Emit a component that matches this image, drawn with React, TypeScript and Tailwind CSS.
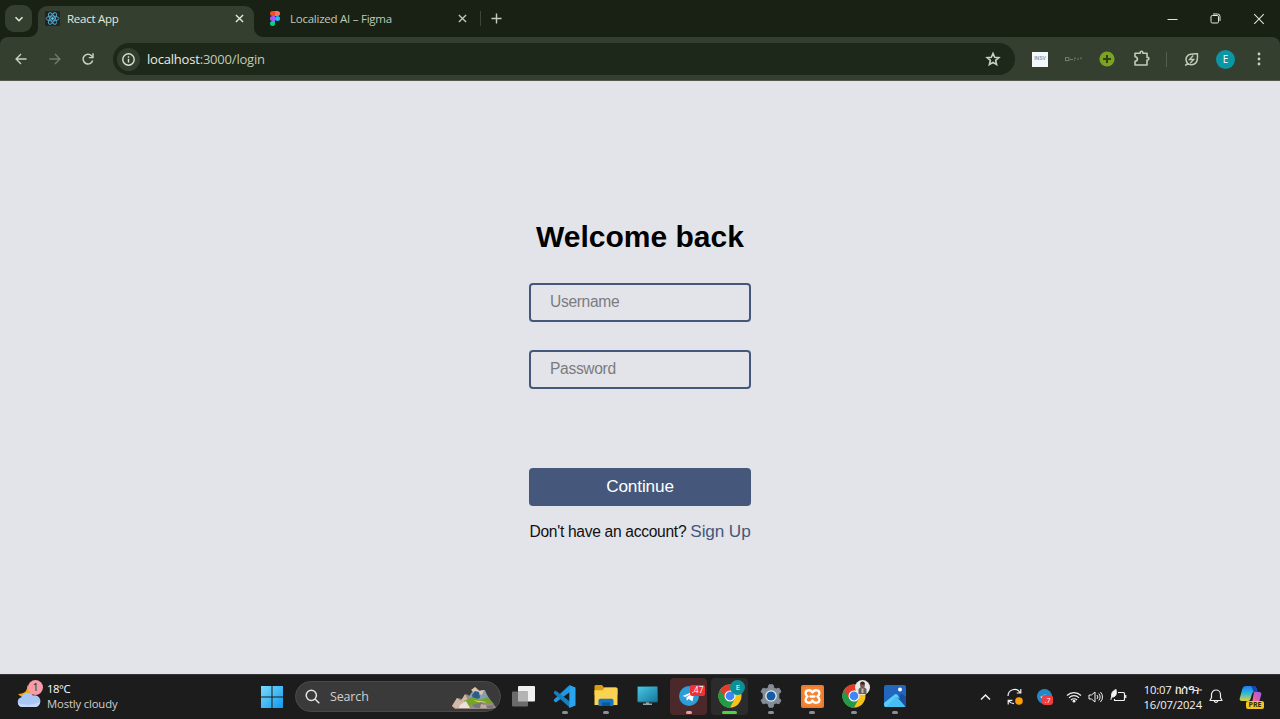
import React from "react";

const ui = "font-['Open_Sans','Noto_Sans',sans-serif]";

type BoxProps = { className?: string; children?: React.ReactNode };

function Slot({ className = "", children }: BoxProps) {
  return <div className={`flex shrink-0 items-center justify-center ${className}`}>{children}</div>;
}

function ReactLogo() {
  return (
    <svg width="15" height="15" viewBox="0 0 15 15">
      <rect width="15" height="15" rx="1" fill="#20232a" />
      <g fill="none" stroke="#53aecb" strokeWidth="0.9">
        <ellipse cx="7.5" cy="7.5" rx="6.4" ry="2.5" />
        <ellipse cx="7.5" cy="7.5" rx="6.4" ry="2.5" transform="rotate(60 7.5 7.5)" />
        <ellipse cx="7.5" cy="7.5" rx="6.4" ry="2.5" transform="rotate(120 7.5 7.5)" />
      </g>
      <circle cx="7.5" cy="7.5" r="1.3" fill="#61dafb" />
    </svg>
  );
}

function FigmaLogo() {
  return (
    <svg width="10" height="15" viewBox="0 0 10 15">
      <path d="M2.5 0H5v5H2.5a2.5 2.5 0 0 1 0-5z" fill="#f24e1e" />
      <path d="M5 0h2.5a2.5 2.5 0 0 1 0 5H5z" fill="#ff7262" />
      <path d="M2.5 5H5v5H2.5a2.5 2.5 0 0 1 0-5z" fill="#a259ff" />
      <circle cx="7.5" cy="7.5" r="2.5" fill="#1abcfe" />
      <path d="M2.5 10H5v2.5A2.5 2.5 0 1 1 2.5 10z" fill="#0acf83" />
    </svg>
  );
}

function Cross({ size, stroke, width }: { size: number; stroke: string; width: number }) {
  return (
    <svg width={size} height={size} viewBox="0 0 10 10" stroke={stroke} strokeWidth={width}>
      <path d="M1 1l8 8M9 1l-8 8" />
    </svg>
  );
}

function Flare({ flip = false }: { flip?: boolean }) {
  return (
    <svg width="9" height="9" viewBox="0 0 9 9" className={`shrink-0 self-end ${flip ? "-scale-x-100" : ""}`}>
      <path d="M9 0v9H0a9 9 0 0 0 9-9z" fill="#343f2f" />
    </svg>
  );
}

function TabStrip() {
  return (
    <div className="flex h-[37px] shrink-0 bg-[#182113]">
      <Slot className="mt-[5px] ml-[5px] size-[27px] rounded-[9px] bg-[#343f2f]">
        <svg width="10" height="10" viewBox="0 0 10 10" fill="none" stroke="#e3e8dc" strokeWidth="1.6">
          <path d="M1.5 3.2L5 6.7l3.5-3.5" />
        </svg>
      </Slot>
      <div className="ml-[-3px] flex">
        <Flare />
        <div className="mt-[6px] flex h-[31px] w-[216px] items-center rounded-t-[9px] bg-[#343f2f] pr-[10px] pb-[6px] pl-[7px]">
          <ReactLogo />
          <span className="mt-px ml-[7px] flex-1 text-[11.5px] leading-[16px] tracking-[-0.25px] text-[#e6eadf]">React App</span>
          <Cross size={9} stroke="#e0e6d8" width={1.6} />
        </div>
        <Flare flip />
      </div>
      <div className="flex h-[37px] w-[204px] items-center pl-[7px]">
        <FigmaLogo />
        <span className="mt-px ml-[10px] flex-1 text-[11.5px] leading-[16px] tracking-[-0.25px] text-[#c0c9b6]">Localized AI – Figma</span>
        <Cross size={9} stroke="#c0c9b6" width={1.5} />
      </div>
      <div className="mt-[11px] ml-[13px] h-[15px] w-px bg-[#3d4938]" />
      <Slot className="ml-[7px] w-[17px]">
        <svg width="11" height="11" viewBox="0 0 11 11" stroke="#c5cebb" strokeWidth="1.4">
          <path d="M5.5 .5v10M.5 5.5h10" />
        </svg>
      </Slot>
      <div className="ml-auto flex">
        <Slot className="w-[43px]">
          <svg width="11" height="11" viewBox="0 0 11 11" stroke="#dfe4da"><path d="M.5 6.500h10" /></svg>
        </Slot>
        <Slot className="w-[43px]">
          <svg width="11" height="11" viewBox="0 0 11 11" fill="none" stroke="#e4e9df">
            <rect x="1" y="2.5" width="7.5" height="7.5" rx="1.3" />
            <path d="M3 1h4.6A2.4 2.4 0 0 1 10 3.4V8" />
          </svg>
        </Slot>
        <Slot className="w-[43px]"><Cross size={12} stroke="#dfe4da" width={0.9} /></Slot>
      </div>
    </div>
  );
}

function Toolbar() {
  return (
    <div className="h-[44px] shrink-0 bg-[#182113]">
      <div className="flex h-[44px] items-center rounded-t-[8px] bg-[#343f2f] shadow-[inset_0_-1px_0_#50594b]">
        <Slot className="ml-[4px] w-[34px]">
          <svg width="12" height="12" viewBox="0 0 13 13" fill="none" stroke="#c8d1be" strokeWidth="1.5">
            <path d="M12.500 6.5H1.5M6.5 1.2L1.2 6.5l5.3 5.3" />
          </svg>
        </Slot>
        <Slot className="w-[33px]">
          <svg width="12" height="12" viewBox="0 0 13 13" fill="none" stroke="#707b69" strokeWidth="1.5">
            <path d="M.5 6.5h11M6.5 1.2l5.3 5.3-5.3 5.3" />
          </svg>
        </Slot>
        <Slot className="w-[34px]">
          <svg width="12" height="12" viewBox="0 0 13 13" fill="none" stroke="#c8d1be" strokeWidth="1.6">
            <path d="M11.600 8.2A5.300 5.300 0 1 1 10.300 2.9L11.3 4.2" />
            <path d="M11.900 .4v4.600H7.4" />
          </svg>
        </Slot>
        <div className="ml-[8px] flex h-[32px] w-[902px] items-center rounded-full bg-[#1e281a] pr-[14px] pl-[4px]">
          <Slot className="size-[23px] rounded-full bg-[#333e2e]">
            <svg width="13" height="13" viewBox="0 0 13 13" fill="none" stroke="#dce3d3" strokeWidth="1.4">
              <circle cx="6.5" cy="6.5" r="5.7" />
              <path d="M6.5 5.8v3.8M6.5 3.3v1.4" />
            </svg>
          </Slot>
          <span className="ml-[7px] flex-1 text-[13px] leading-[18px] tracking-[-0.2px] text-[#c0cab5]"><span className="text-[#e8ece2]">localhost</span>:3000/login</span>
          <svg width="16" height="16" viewBox="0 0 24 24" fill="none" stroke="#c8d1be" strokeWidth="2.400" strokeLinejoin="miter">
            <path d="M12 3.6l2.5 5.8 6.3.6-4.8 4.1 1.4 6.2-5.4-3.3-5.4 3.3 1.4-6.2L3.2 10l6.3-.6z" />
          </svg>
        </div>
        <Slot className="ml-[17px] h-[15px] w-[16px] bg-[#f5f7fa] font-['Liberation_Sans',sans-serif] text-[5px] font-bold text-[#86a2b5]">INSV</Slot>
        <Slot className="ml-[17px] w-[17px]">
          <svg width="17" height="5" viewBox="0 0 17 5" fill="none" stroke="#858e7e" strokeWidth=".8">
            <rect x=".5" y=".7" width="3.5" height="3" />
            <path d="M5 2.5h3M9 1.2h2M9 3.2h1M12 2h2M15 1.2h2" />
          </svg>
        </Slot>
        <Slot className="ml-[17px] w-[16px]">
          <svg width="16" height="16" viewBox="0 0 16 16">
            <circle cx="8" cy="8" r="7.6" fill="#7ba321" />
            <path d="M8 4v8M4 8h8" stroke="#2e4211" strokeWidth="2" />
          </svg>
        </Slot>
        <Slot className="ml-[18px] w-[17px] pb-px">
          <svg width="17" height="17" viewBox="0 0 17 17" fill="none" stroke="#c1cbb7" strokeWidth="1.6" strokeLinejoin="round">
            <path d="M2 3.200h5.200V2.600a1.300 1.300 0 0 1 2.600 0v.6H14v4.200h.6a1.300 1.300 0 0 1 0 2.600H14V15H2v-3.600c3.200-.4 3.200-4.200 0-4.600z" />
          </svg>
        </Slot>
        <div className="ml-[16px] h-[15px] w-px bg-[#53604c]" />
        <Slot className="ml-[16px] w-[16px]">
          <svg width="15" height="15" viewBox="0 0 16 16" fill="none" stroke="#c1cbb7" strokeWidth="1.6">
            <path d="M14.300 1.800c.3 4.300.2 7.900-1.700 9.800-2.400 2.400-6.500 2.600-8.800.3s-2.200-6 .4-8.300c2.300-2 5.800-1.700 10.100-1.800zM4 12L1.300 14.500" />
            <path d="M9.800 3.800L5.900 8h4.400L6.600 12" strokeWidth="1.400" />
          </svg>
        </Slot>
        <Slot className="ml-[17px] size-[19px] rounded-full bg-[#0b96a6] text-[10px] leading-none text-white">E</Slot>
        <Slot className="ml-[15px] w-[18px]">
          <svg width="4" height="14" viewBox="0 0 4 14" fill="#c8d1be">
            <circle cx="2" cy="2" r="1.4" /><circle cx="2" cy="7" r="1.4" /><circle cx="2" cy="12" r="1.4" />
          </svg>
        </Slot>
      </div>
    </div>
  );
}

function LoginPage() {
  const field =
    "block h-[39px] w-full rounded-[4px] border-2 border-[#45587c] bg-transparent px-[19px] pb-px text-[15.600px] tracking-[-0.33px] text-[#222] placeholder:text-[#7b7b7e] outline-none";
  return (
    <main className="flex flex-1 justify-center bg-[#e3e4ea] font-['Liberation_Sans',Arial,sans-serif]">
      <div className="w-[222px] pt-[138px]">
        <h1 className="text-center text-[30px] leading-[36px] font-bold whitespace-nowrap text-black">Welcome back</h1>
        <input className={`mt-[28px] ${field}`} placeholder="Username" />
        <input className={`mt-[28px] ${field}`} type="password" placeholder="Password" />
        <button className="mt-[79px] block h-[38px] w-full rounded-[4px] bg-[#45587b] text-[17.200px] tracking-[-0.15px] text-white">Continue</button>
        <p className="mt-[13px] pl-[0.5px] text-[15.600px] leading-[24px] tracking-[-0.3px] whitespace-nowrap text-[#101010]">
          Don't have an account? <a className="text-[17.200px] tracking-[-0.12px] text-[#45587b]">Sign Up</a>
        </p>
      </div>
    </main>
  );
}

function ChromeLogo() {
  return (
    <svg width="24" height="24" viewBox="0 0 24 24">
      <circle cx="12" cy="12" r="11.500" fill="#fbc116" />
      <path d="M12 12L2.040 6.250A11.500 11.500 0 0 1 21.960 6.250L12 6.500z" fill="#e33b2e" />
      <path d="M2.040 6.250A11.500 11.500 0 0 0 12 23.500L16.800 14.700 12 12z" fill="#229a49" />
      <path d="M2.040 6.250L7.200 15 12 12V6.500z" fill="#e33b2e" />
      <path d="M2.040 6.250L7.200 14.700A5.500 5.500 0 0 0 13 17.400L12 23.500A11.500 11.500 0 0 1 2.040 6.250z" fill="#229a49" />
      <circle cx="12" cy="12" r="5.500" fill="#fff" />
      <circle cx="12" cy="12" r="4.400" fill="#4285f4" />
    </svg>
  );
}

function VsCode() {
  return (
    <svg width="23" height="23" viewBox="0 0 24 24">
      <path d="M1 15.200L17 .3 18 7 3 18.200 1 17z" fill="#2097df" />
      <path d="M1 6.900l2-1 15 11.600V24L1 8.900z" fill="#147fc3" />
      <path d="M17 0l6.500 2.700v18.600L17 24z" fill="#2ba4ee" />
    </svg>
  );
}

function Folder() {
  return (
    <svg width="24" height="22" viewBox="0 0 24 22">
      <path d="M1.500 0h6.500l2 2.500h12a1.500 1.500 0 0 1 1.500 1.500v6H.5V1z" fill="#d99d13" />
      <path d="M.5 5.200h8L10.500 2.500H22a1.500 1.500 0 0 1 1.500 1.500V20H.5z" fill="#fbd252" />
      <path d="M4.500 21v-5.500a1.700 1.700 0 0 1 1.700-1.700h11.600a1.700 1.700 0 0 1 1.700 1.700V21z" fill="#1675bf" />
      <path d="M8 17.500h8V21H8z" fill="#0d5796" />
    </svg>
  );
}

function Monitor() {
  return (
    <svg width="21" height="20" viewBox="0 0 21 20">
      <defs>
        <linearGradient id="screen" x1="0" y1="0" x2="1" y2="1">
          <stop stopColor="#4cc8e3" /><stop offset="1" stopColor="#13769c" />
        </linearGradient>
      </defs>
      <path d="M9 15h3v2.500h3v1.500H6v-1.500h3z" fill="#96a5ac" />
      <rect x=".5" y=".5" width="20" height="15.500" rx="1" fill="url(#screen)" stroke="#256174" />
    </svg>
  );
}

function Telegram({ size }: { size: number }) {
  return (
    <svg width={size} height={size} viewBox="0 0 20 20">
      <circle cx="10" cy="10" r="10" fill="#2b9dd8" />
      <path d="M3.500 10L15.500 5l-2 10.500-3.800-2.600-1.900 1.900-.5-3.300L13 7.200l-6.600 3.900z" fill="#fff" />
    </svg>
  );
}

function Gear() {
  return (
    <svg width="24" height="24" viewBox="0 0 24 24">
      <path
        d="M10 .8h4l.7 3 2.300 1.300 3-.9 2 3.500-2.200 2.100v4.400l2.200 2.100-2 3.500-3-.9-2.300 1.300-.7 3h-4l-.7-3L7 18.900l-3 .9-2-3.500 2.200-2.100V9.800L2 7.700l2-3.500 3 .9 2.300-1.300z"
        fill="#858e97" stroke="#858e97" strokeLinejoin="round"
      />
      <circle cx="12" cy="12" r="5.800" fill="#e5eaf0" />
      <circle cx="12" cy="12" r="4.500" fill="#155ba8" />
    </svg>
  );
}

function Xampp() {
  return (
    <svg width="23" height="23" viewBox="0 0 23 23">
      <rect width="23" height="23" rx="2" fill="#f58433" />
      <rect x="1" y="1" width="21" height="21" rx="1.500" fill="none" stroke="#e06b1d" strokeWidth=".7" />
      <g fill="none" stroke="#fff" strokeWidth="2.300" strokeLinecap="round" strokeLinejoin="round">
        <path d="M11.500 7.500C10 4.300 4.600 4.600 4.600 8q0 2.300 2 3.500-2 1.200-2 3.500c0 3.400 5.400 3.700 6.900.5 1.500 3.200 6.900 2.900 6.900-.5q0-2.300-2-3.500 2-1.200 2-3.500c0-3.400-5.400-3.700-6.900-.5z" />
        <path d="M9.500 11.500h4" />
      </g>
    </svg>
  );
}

function Photos() {
  return (
    <svg width="22" height="22" viewBox="0 0 22 22">
      <rect width="22" height="22" rx="2" fill="#2366bd" />
      <path d="M12 14l5-4.500q1-.8 2 0l3 2.500v8a2 2 0 0 1-2 2h-3z" fill="#194f9e" />
      <path d="M1 21.500l9.600-10.300a1.500 1.500 0 0 1 2 0L21.300 21.500q-.7.500-1.300.5H2q-.6 0-1-.5z" fill="#48bdf2" />
      <path d="M0 18l10.600-8.500q1.500-1 3 .5l2.500 3.500-4.200-1.800L2 22q-2 0-2-2z" fill="#58cdf8" />
      <circle cx="16" cy="4.500" r="2" fill="#fff" />
    </svg>
  );
}

function TaskItem({ children, mark = "bg-[#8e8e8e] w-[6px]", box = "" }: { children: React.ReactNode; mark?: string; box?: string }) {
  return (
    <div className="flex w-[41.25px] justify-center">
      <div className={`relative flex h-[37px] w-[37px] items-center justify-center rounded-[4px] ${box}`}>
        {children}
        <div className={`absolute bottom-px h-[3px] rounded-full ${mark}`} />
      </div>
    </div>
  );
}

function SearchArt() {
  return (
    <svg width="44" height="22" viewBox="0 0 44 22">
      <path d="M0 19l5-8 5 1 4-5 4 2 5-9 5 4 4-1 5 8 6 8 1 2-7 1H3z" fill="#9a8a84" />
      <path d="M0 19l5-8 4 3 4-7 3 6-3 8H3z" fill="#d3b8aa" />
      <path d="M16 11l6-9 5 2 6-1 3 8-9 4z" fill="#829eb0" />
      <path d="M19 3l4-3 4 4 5-1-2 5-7-2z" fill="#dfc3aa" />
      <path d="M20 8l3-4 4 1 1 6-7 2z" fill="#2b5d88" />
      <path d="M12 14l8-4 9 3 6-3 7 7-12-2-10 3-7 1z" fill="#74a52b" />
      <path d="M21 13l8 1 6 1-7 1z" fill="#d1d445" />
      <path d="M20 18l9-3 6 4 7-1-2 3H24z" fill="#73777e" />
      <path d="M8 18l6-4 4 7H7z" fill="#ede1dc" />
      <path d="M29 17l5 1 1 3h-7z" fill="#c9a9a0" />
    </svg>
  );
}

function Tray() {
  const line = { fill: "none", stroke: "#f0f0f0", strokeWidth: 1.2 };
  return (
    <div className="ml-auto flex h-full items-center">
      <Slot className="w-[20px]">
        <svg width="11" height="8" viewBox="0 0 11 8" {...line} strokeWidth={1.500}><path d="M1 6.500l4.500-4.500L10 6.500" /></svg>
      </Slot>
      <Slot className="ml-[11px] w-[18px]">
        <svg width="18" height="18" viewBox="0 0 18 18" {...line}>
          <path d="M2 8a6.500 6.500 0 0 1 12-3.500M14.800 1v4h-4M2.200 16.500v-4.200h4.200M2.800 12.800A7 7 0 0 0 8 15.700" />
          <circle cx="13" cy="13" r="3.800" fill="#ff9d0a" stroke="none" />
        </svg>
      </Slot>
      <Slot className="relative ml-[13px] size-[15px]">
        <svg width="15" height="15" viewBox="0 0 15 15"><circle cx="7.500" cy="7.500" r="7.500" fill="#2488c4" /><path d="M3 8l6-3-3 5z" fill="#a8d5ee" /></svg>
        <div className="absolute -right-px -bottom-px flex h-[10px] w-[11px] items-center justify-center rounded-[3px] bg-[#f33d3c] text-[7px] leading-none text-white">.7</div>
      </Slot>
      <Slot className="ml-[14px] w-[16px]">
        <svg width="16" height="12" viewBox="0 0 16 12" {...line} strokeWidth={1.200}>
          <path d="M1 4.500a10 10 0 0 1 14 0M3 6.800a7 7 0 0 1 10 0M5 9a4.300 4.300 0 0 1 6 0" />
          <circle cx="8" cy="10.200" r="1.400" fill="#f0f0f0" stroke="none" />
        </svg>
      </Slot>
      <Slot className="ml-[6px] w-[15px]">
        <svg width="15" height="12" viewBox="0 0 15 12" {...line} strokeWidth={1}>
          <path d="M1 4h2.500L7 1v10L3.500 8H1zM9 4a3 3 0 0 1 0 4M10.700 2.500a5 5 0 0 1 0 7M12.400 1a7 7 0 0 1 0 10" />
        </svg>
      </Slot>
      <Slot className="ml-[7px] w-[17px] pb-px">
        <svg width="17" height="14" viewBox="0 0 17 14" {...line}>
          <path d="M8 3.500h5.500a1 1 0 0 1 1 1v6a1 1 0 0 1-1 1H4.500V10M15.800 6v3" />
          <path d="M6 .5C3.500 1.500 1.200 3 1.500 7.500L.8 11M1.500 8.200C6 8.200 7.200 5 6 .5z" fill="#f4f4f4" strokeWidth=".8" />
        </svg>
      </Slot>
      <div className="ml-[13px] w-[62px] text-[11.300px] leading-[15px] whitespace-nowrap text-[#f2f2f2]">
        <div className="flex items-baseline justify-end tracking-[-0.2px]">10:07<span className="ml-[3px] text-[11.800px] leading-[15px] tracking-[-0.4px]">ከሰዓት</span></div>
        <div className="flex justify-end tracking-[-0.15px]">16/07/2024</div>
      </div>
      <Slot className="ml-[7px] w-[14px]">
        <svg width="14" height="15" viewBox="0 0 14 15" {...line}>
          <path d="M1 11.500L2.500 8.500V5.500a4.500 4.500 0 0 1 9 0v3L13 11.500zM5.200 12a1.900 1.900 0 0 0 3.600 0" strokeLinejoin="round" />
        </svg>
      </Slot>
      <Slot className="relative mr-[17px] ml-[16px] size-[24px]">
        <svg width="24" height="24" viewBox="0 0 24 24">
          <defs>
            <linearGradient id="blue" x1="0" y1="0" x2="0" y2="1">
              <stop stopColor="#2379ed" /><stop offset=".45" stopColor="#25b6df" /><stop offset="1" stopColor="#e5cf35" />
            </linearGradient>
            <linearGradient id="pink" x1="1" y1="0" x2="0" y2="1">
              <stop stopColor="#9460ed" /><stop offset=".5" stopColor="#ec5ba4" /><stop offset="1" stopColor="#f7924c" />
            </linearGradient>
          </defs>
          <path d="M15 7h5q3 0 2.200 3l-2 7q-1 4-4 4h-6q2 0 2.800-3z" fill="url(#pink)" />
          <path d="M7 1h8q2 0 2.700 3l.8 3h-3.500q-1.500 0-2 2l-1.500 5q-.6 2-2.500 2H3Q0 16 .8 13l2.500-9Q4.200 1 7 1z" fill="url(#blue)" />
          <path d="M12 1h3q2 0 2.700 3l.8 3h-4q-1.500-5-2.500-6z" fill="#1847b3" />
        </svg>
        <div className="absolute -right-px bottom-0 flex h-[8px] w-[18px] items-center justify-center rounded-[2px] bg-[#f5c51f] text-[7px] leading-none font-bold text-[#332b0b]">PRE</div>
      </Slot>
    </div>
  );
}

function Taskbar() {
  return (
    <div className="flex h-[45px] shrink-0 items-center bg-[#1c1c1c] shadow-[inset_0_1px_0_#343434]">
      <div className="flex w-[260px] items-center pb-px pl-[17px]">
        <div className="relative mb-[3px] h-[30px] w-[26px] shrink-0">
          <svg width="26" height="30" viewBox="0 0 26 30">
            <path d="M10 5c1 5-2 9-9 9 4 5 13 5 15-1z" fill="#f1a71c" />
            <path d="M5 27a5 5 0 0 1-.5-9.800A6.500 6.500 0 0 1 16 15.500 5.800 5.800 0 0 1 19 27z" fill="#a9c6f4" />
            <path d="M1 23q11 4 22-1-1 5-5 5H5q-3 0-4-4z" fill="#c5dafb" />
          </svg>
          <div className="absolute top-0 right-0 flex size-[15px] items-center justify-center rounded-full bg-[#fb9ba4] text-[10px] leading-none text-[#242020]">1</div>
        </div>
        <div className="ml-[4px] text-[11.300px] leading-[15px] whitespace-nowrap">
          <div className="tracking-[-0.4px] text-white">18°C</div>
          <div className="tracking-[-0.15px] text-[#cfcfcf]">Mostly cloudy</div>
        </div>
      </div>
      <Slot className="w-[24px]">
        <svg width="22" height="22" viewBox="0 0 22 22">
          <defs>
            <linearGradient id="win" x1="0" y1="0" x2="1" y2="1">
              <stop stopColor="#78dcfb" /><stop offset="1" stopColor="#1298ee" />
            </linearGradient>
          </defs>
          <path d="M0 0h10.500v10.500H0zM11.500 0H22v10.500H11.500zM0 11.500h10.500V22H0zM11.500 11.500H22V22H11.500z" fill="url(#win)" />
        </svg>
      </Slot>
      <div className="ml-[11px] flex h-[31px] w-[206px] items-center rounded-full border border-[#4a4a4a] bg-[#3a3a3a] pr-[4px] pl-[9px]">
        <svg width="15" height="15" viewBox="0 0 15 15" fill="none" stroke="#e4e4e4" strokeWidth="1.500">
          <circle cx="6.300" cy="6.300" r="5.100" /><path d="M10 10l4.300 4.300" />
        </svg>
        <span className="ml-[10px] flex-1 text-[12.500px] leading-[18px] tracking-[-0.15px] text-[#d0d0d0]">Search</span>
        <div className="mt-[3px]"><SearchArt /></div>
      </div>
      <div className="ml-[2px] flex pb-px">
        <TaskItem mark="hidden">
          <svg width="23" height="21" viewBox="0 0 23 21">
            <rect x="6" width="17" height="15.500" rx="1" fill="#f0f0f0" />
            <rect y="5.500" width="16" height="15" rx="1" fill="#6b6b6b" />
            <path d="M6 5.500h10v10H6z" fill="#b4b4b4" />
          </svg>
        </TaskItem>
        <TaskItem><VsCode /></TaskItem>
        <TaskItem><Folder /></TaskItem>
        <TaskItem mark="hidden"><Monitor /></TaskItem>
        <TaskItem box="bg-[#4b292a]" mark="bg-[#e9a0a2] w-[6px]">
          <Telegram size={20} />
          <div className="absolute top-[7px] right-[2px] flex h-[11px] w-[15px] items-center justify-center rounded-[2px] bg-[#ee3334] text-[8.500px] leading-none text-white">.47</div>
        </TaskItem>
        <TaskItem box="bg-[#2b2b2b]" mark="bg-[#4cd43c] w-[15px]">
          <ChromeLogo />
          <div className="absolute top-[2px] right-[3px] flex size-[15px] items-center justify-center rounded-full bg-[#0b8f98] text-[8px] leading-none text-white">E</div>
        </TaskItem>
        <TaskItem><Gear /></TaskItem>
        <TaskItem><Xampp /></TaskItem>
        <TaskItem>
          <ChromeLogo />
          <svg width="15" height="15" viewBox="0 0 15 15" className="absolute top-[2px] right-[2px]">
            <circle cx="7.500" cy="7.500" r="7.500" fill="#e8e8e8" />
            <path d="M3.500 14V9l2-1.500h4l2 1.500v5z" fill="#68605b" />
            <ellipse cx="7.500" cy="5.300" rx="2.300" ry="3.300" fill="#795a4c" />
            <path d="M5.200 4.500Q5 1.500 7.500 1.500T9.800 4.500z" fill="#302a28" />
            <path d="M6.500 8.500h2V13h-2z" fill="#c5b5ae" />
          </svg>
        </TaskItem>
        <TaskItem><Photos /></TaskItem>
      </div>
      <Tray />
    </div>
  );
}

export default function App() {
  return (
    <div className={`flex h-[719px] w-[1280px] flex-col overflow-hidden ${ui}`}>
      <TabStrip />
      <Toolbar />
      <LoginPage />
      <Taskbar />
    </div>
  );
}
